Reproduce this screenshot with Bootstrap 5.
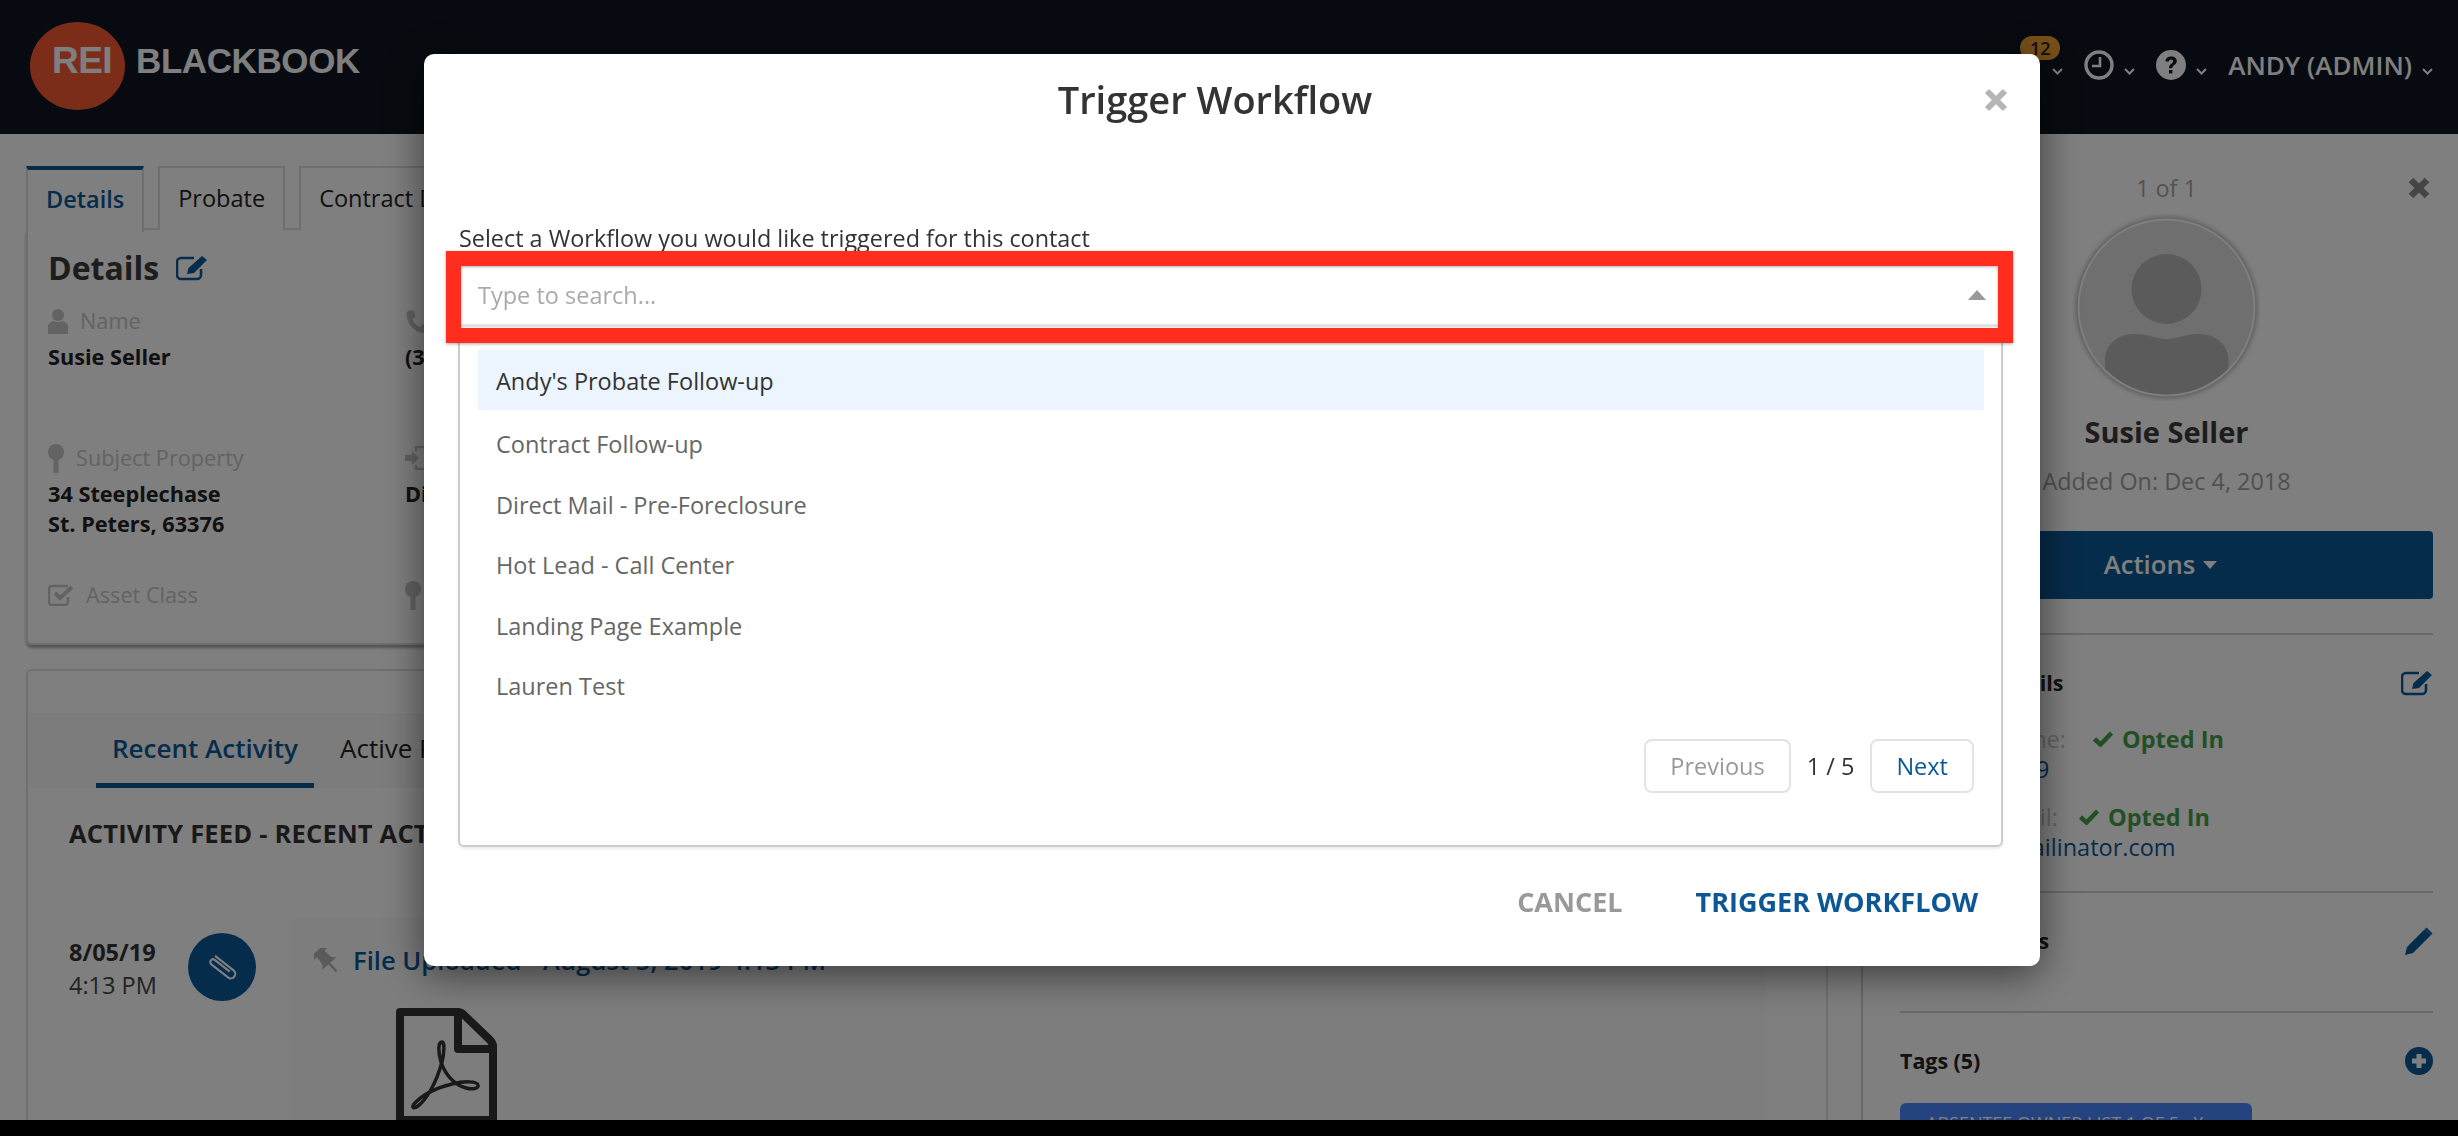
<!DOCTYPE html>
<html lang="en">
<head>
  <meta charset="UTF-8">
  <meta name="viewport" content="width=device-width, initial-scale=1.0">
  <title>Trigger Workflow</title>
  <!-- Bootstrap CSS -->
  <link href="https://cdn.jsdelivr.net/npm/bootstrap@5.3.0/dist/css/bootstrap.min.css" rel="stylesheet">
  <style>
    html, body { height: 100%; }
    body { background: #000; overflow: hidden; font-family: "Open Sans", sans-serif; font-size: 23.5px; color: #222; }
    svg { display: block; flex: none; }

    /* page behind the modal (colours are doubled, the backdrop halves them) */
    .app-shell { height: 1120px; overflow: hidden; background: #fff; }
    .top-bar { height: 134px; background: #0e1520; padding: 0 25px 0 30px; align-items: flex-start; flex-wrap: nowrap; }
    .logo-wrap { gap: 11px; margin-top: 22px; }
    .logo-disc { width: 95px; height: 88px; border-radius: 50%; background: #f85a34; font: 700 37px "Liberation Sans", sans-serif; color: #fff; letter-spacing: -.5px; padding: 0 0 10px 9px; }
    .logo-name { font: 700 35px "Liberation Sans", sans-serif; color: #fff; letter-spacing: -.4px; margin-top: -10px; }
    .top-tools { margin-top: 50px; color: #fff; }
    .tool-item { gap: 10px; margin-left: 21px; position: relative; }
    .tool-name { font-weight: 600; font-size: 26px; line-height: 30px; }
    .tool-count { position: absolute; left: 8px; top: -14px; width: 40px; height: 24px; border-radius: 12px; background: #f0a030; color: #222; font-size: 18px; font-weight: 600; line-height: 24px; text-align: center; }
    .tool-chev { margin-top: 18px; }

    .main-row { height: 986px; }
    .left-side { width: 1861px; padding: 32px 33px 0 26px; flex: none; }
    .right-side { width: 597px; flex: none; padding: 0 25px 0 37px; border-left: 2px solid #d2d2d2; }

    .page-tabs { border-bottom: 2px solid #dedede; gap: 14px; height: 64px; flex-wrap: nowrap; }
    .page-tabs .nav-link { height: 64px; padding: 0 18px; border: 2px solid #dedede; border-bottom: 0; border-radius: 0; color: #222; font-size: 23.5px; line-height: 60px; background: #fff; margin: 0; white-space: nowrap; }
    .page-tabs .nav-link.active { border-top: 4px solid #0c5898; color: #0c5898; font-weight: 600; padding: 0 18px; height: 66px; line-height: 58px; }
    .info-card { height: 415px; border: 2px solid #dcdcdc; border-top: 0; border-radius: 0 0 6px 6px; box-shadow: 0 3px 3px rgba(0,0,0,.35); padding: 16px 20px 0; }
    .info-title { font-size: 32px; font-weight: 700; line-height: 44px; gap: 17px; color: #3a3a3a; }
    .info-grid { display: grid; grid-template-columns: 357px 357px; grid-auto-rows: 137px; margin-top: 16px; }
    .info-label { gap: 12px; color: #c6c6c6; font-size: 21.7px; line-height: 30px; align-items: center; }
    .info-value { font-weight: 700; color: #222; font-size: 21.7px; line-height: 30px; margin-top: 6px; }

    .feed-card { margin-top: 24px; height: 460px; border: 2px solid #e0e0e0; border-bottom: 0; border-radius: 6px 6px 0 0; }
    .feed-tabs { margin-top: 42px; height: 75px; background: #f8f8f8; padding-left: 68px; gap: 10px; }
    .feed-tabs .nav-link { color: #222; font-size: 26px; padding: 0 16px; height: 75px; line-height: 70px; }
    .feed-tabs .nav-link.active { color: #0c5898; font-weight: 600; border-bottom: 5px solid #0c5898; }
    .feed-head { font-size: 25.5px; font-weight: 700; letter-spacing: .2px; color: #333; margin: 28px 0 0 41px; line-height: 34px; white-space: nowrap; }
    .feed-row { margin: 67px 0 0 41px; }
    .feed-when { width: 119px; font-size: 23.5px; line-height: 33px; color: #444; padding-top: 19px; flex: none; }
    .feed-when b { color: #333; }
    .feed-dot { width: 68px; height: 68px; border-radius: 50%; background: #0c5898; margin-top: 16px; flex: none; }
    .feed-body { width: 1476px; height: 210px; margin-left: 34px; background: #fbfbfb; border-radius: 10px 10px 0 0; padding: 28px 24px; flex: none; }
    .feed-link { gap: 13px; font-size: 25.6px; font-weight: 600; color: #0c5898; line-height: 32px; }
    .feed-file { margin: 31px 0 0 82px; }

    .side-count { margin-top: 39px; height: 30px; line-height: 30px; color: #a6a6a6; font-size: 23.5px; }
    .side-gap { width: 25px; }
    .side-x { margin-right: 3px; }
    .side-face { margin-top: 11px; }
    .side-name { font-size: 29px; font-weight: 700; color: #3a3a3a; line-height: 38px; margin-top: 12px; }
    .side-added { font-size: 23.4px; color: #a0a0a0; line-height: 32px; margin-top: 14px; }
    .side-btn { height: 68px; margin-top: 34px; background: #0c5898; color: #fff; font-size: 25.7px; font-weight: 600; border-radius: 4px; gap: 8px; padding-right: 24px; margin-bottom: 34px; }
    .side-btn:hover { background: #0c5898; color: #fff; }
    .side-rule { height: 2px; background: #d2d2d2; }
    .side-block-a { height: 256px; padding-top: 33px; }
    .side-block-b { height: 118px; padding-top: 33px; }
    .side-block-c { padding-top: 33px; }
    .side-title { font-size: 21.4px; font-weight: 700; color: #222; line-height: 30px; }
    .opt-row { gap: 27px; margin-top: 26px; line-height: 30px; align-items: center; font-size: 23.5px; color: #c6c6c6; white-space: nowrap; }
    .opt-row.opt-mail { margin-top: 18px; gap: 23px; }
    .opt-label { width: 166px; text-align: right; }
    .opt-mail .opt-label { width: 156px; }
    .opt-state { gap: 9px; color: #469e4a; font-weight: 700; font-size: 23.5px; }
    .opt-link { color: #0c5898; font-size: 23.5px; line-height: 30px; }
    .tag-chip { margin-top: 27px; width: 352px; height: 40px; background: #4a86ff; border-radius: 6px; color: #fff; font-size: 18px; line-height: 40px; padding-left: 26px; white-space: nowrap; }
    .tag-chip span { margin-left: 14px; }

    /* modal */
    .wf-dialog { max-width: 1616px; margin: 54px 0 0 424px; }
    .wf-content { height: 912px; border: 0; border-radius: 10px; box-shadow: 0 8px 40px rgba(0,0,0,.55); }
    .wf-head { height: 90px; padding: 0 28px 0 26px; margin-bottom: 2px; flex-wrap: nowrap; }
    .wf-title { flex-grow: 1; text-align: center; font-size: 38px; font-weight: 600; color: #333; line-height: 46px; }
    .wf-close { width: 32px; height: 32px; padding: 4px; border: 0; background: none; margin-top: 2px; }
    .wf-body { padding: 77px 37px 0 34px; flex: none; }
    .wf-label { display: block; font-size: 23.4px; line-height: 30px; color: #333; margin: 0 0 9px 1px; white-space: nowrap; }
    .wf-card { height: 585px; border: 2px solid #ccc; border-radius: 6px; box-shadow: 0 2px 3px rgba(0,0,0,.08); }
    .wf-search { position: relative; height: 61px; margin: 2px 3px 0 1px; border-bottom: 3px solid #e3e3e3; background: #fff; padding: 0 12px 0 17px; }
    .wf-input { border: 0; outline: 0; width: 100%; height: 58px; padding: 0; font-size: 23.5px; color: #333; background: none; }
    .wf-input::placeholder { color: #aaa; opacity: 1; }
    .wf-mark { position: absolute; left: -15px; right: -15px; top: -15px; bottom: -19px; border: 15px solid #ff2d1e; box-shadow: 0 1px 3px rgba(0,0,0,.35), inset 0 1px 3px rgba(0,0,0,.3); pointer-events: none; }
    .wf-card > .wf-list { margin: 23px 17px 0 18px; border-radius: 0; border-top: 0; border-bottom: 0; }
    .wf-list .list-group-item { height: 60.4px; border: 0; padding: 0 18px; line-height: 62px; font-size: 23.5px; color: #666; }
    .wf-list .list-group-item.is-on { background: #ecf4fe; color: #333; margin-bottom: 3px; }
    .wf-pager { gap: 16px; margin: 24px 27px 0 0; font-size: 23.5px; color: #333; }
    .wf-page { height: 54px; border: 2px solid #e3e3e3; border-radius: 8px; font-size: 23.5px; background: #fff; padding: 0 24px; color: #0c5896; }
    .wf-page.is-off:disabled { color: #999; opacity: 1; border-color: #e3e3e3; }
    .wf-foot { height: 110px; padding: 0 62px 0 0; gap: 73px; flex-wrap: nowrap; margin-bottom: 9px; }
    .wf-act { padding: 0; margin: 0; border: 0; font-size: 27px; font-weight: 700; color: #0c5896; }
    .wf-act.is-dim { color: #999; }
  </style>
</head>
<body>
<div class="app-shell">
  <nav class="navbar top-bar">
    <div class="d-flex logo-wrap align-items-center">
      <div class="logo-disc d-flex align-items-center justify-content-center">REI</div>
      <div class="logo-name">BLACKBOOK</div>
    </div>
    <div class="d-flex top-tools">
      <div class="d-flex tool-item">
        <svg width="30" height="30" viewBox="0 0 16 16" fill="#fff"><path d="M2 6h3l7-4v12l-7-4H2z"/></svg>
        <span class="tool-count">12</span>
        <svg class="tool-chev" width="11" height="7" viewBox="0 0 11 7" fill="none" stroke="#fff" stroke-width="2"><path d="M1 1l4.500 4.500L10 1"/></svg>
      </div>
      <div class="d-flex tool-item">
        <svg width="30" height="30" viewBox="0 0 30 30" fill="none" stroke="#fff" stroke-width="3.400"><circle cx="15" cy="15" r="13"/><path d="M16 7v9H8" stroke-width="2.600"/></svg>
        <svg class="tool-chev" width="11" height="7" viewBox="0 0 11 7" fill="none" stroke="#fff" stroke-width="2"><path d="M1 1l4.500 4.500L10 1"/></svg>
      </div>
      <div class="d-flex tool-item">
        <svg width="30" height="30" viewBox="0 0 30 30"><circle cx="15" cy="15" r="15" fill="#fff"/><path d="M9.500 11.500c0-3.200 2.500-5 5.700-5 3.300 0 5.600 1.800 5.600 4.600 0 4-4.500 3.800-4.500 7.100h-3.300c0-4.700 4.200-4.600 4.200-7 0-1.100-.9-1.800-2.100-1.800-1.300 0-2.200.8-2.300 2.100z" fill="#0e1520"/><rect x="13" y="20" width="3.400" height="3.400" fill="#0e1520"/></svg>
        <svg class="tool-chev" width="11" height="7" viewBox="0 0 11 7" fill="none" stroke="#fff" stroke-width="2"><path d="M1 1l4.500 4.500L10 1"/></svg>
      </div>
      <div class="d-flex tool-item">
        <span class="tool-name">ANDY (ADMIN)</span>
        <svg class="tool-chev" width="11" height="7" viewBox="0 0 11 7" fill="none" stroke="#fff" stroke-width="2"><path d="M1 1l4.500 4.500L10 1"/></svg>
      </div>
    </div>
  </nav>

  <div class="d-flex main-row">
    <div class="left-side">
      <ul class="nav page-tabs">
        <li class="nav-item"><a class="nav-link active" href="#">Details</a></li>
        <li class="nav-item"><a class="nav-link" href="#">Probate</a></li>
        <li class="nav-item"><a class="nav-link" href="#">Contract Details</a></li>
      </ul>
      <div class="info-card">
        <div class="d-flex align-items-center info-title">Details
          <svg width="32" height="26" viewBox="0 0 32 26" fill="none" stroke="#0c5898" stroke-width="2.600"><path d="M25 14v6a4 4 0 0 1-4 4H5a4 4 0 0 1-4-4V7a4 4 0 0 1 4-4h13"/><path d="M11 19l1.500-6L26 1l5 4-13 13z" fill="#0c5898" stroke="none"/></svg>
        </div>
        <div class="info-grid">
          <div>
            <div class="d-flex info-label">
              <svg width="20" height="25" viewBox="0 0 20 25" fill="#c6c6c6"><circle cx="10" cy="6" r="6"/><path d="M0 25v-7c0-4 3-5 6-6 2 1.500 6 1.500 8 0 3 1 6 2 6 6v7z"/></svg>
              Name
            </div>
            <div class="info-value">Susie Seller</div>
          </div>
          <div>
            <div class="d-flex info-label">
              <svg width="24" height="24" viewBox="0 0 16 16" fill="#c6c6c6"><path d="M3 1h3l1 4-2 2c1 2.500 2.500 4 5 5l2-2 3 1.500V14c0 1-1 2-2 2C6 16 1 9 1 3c0-1 1-2 2-2z"/></svg>
              Phone
            </div>
            <div class="info-value">(314) 555-0199</div>
          </div>
          <div>
            <div class="d-flex info-label">
              <svg width="16" height="29" viewBox="0 0 16 29" fill="#c6c6c6"><path d="M8 0a8 8 0 0 1 8 8c0 5-3 8-8 8s-8-3-8-8a8 8 0 0 1 8-8z"/><rect x="5.500" y="15" width="5" height="14"/></svg>
              Subject Property
            </div>
            <div class="info-value">34 Steeplechase<br>St. Peters, 63376</div>
          </div>
          <div>
            <div class="d-flex info-label">
              <svg width="24" height="24" viewBox="0 0 24 24" fill="#c6c6c6"><path d="M0 9h7V5l7 7-7 7v-4H0z"/><path d="M11 5V1h12v22H11v-4" fill="none" stroke="#c6c6c6" stroke-width="2.500"/></svg>
              Lead Source
            </div>
            <div class="info-value">Direct Mail</div>
          </div>
          <div>
            <div class="d-flex info-label">
              <svg width="26" height="22" viewBox="0 0 26 22" fill="none" stroke="#c6c6c6" stroke-width="2.400"><path d="M20 13v5a3 3 0 0 1-3 3H4a3 3 0 0 1-3-3V5a3 3 0 0 1 3-3h16"/><path d="M7 9l5 5L24 3" stroke-width="4"/></svg>
              Asset Class
            </div>
          </div>
          <div>
            <div class="d-flex info-label">
              <svg width="16" height="29" viewBox="0 0 16 29" fill="#c6c6c6"><path d="M8 0a8 8 0 0 1 8 8c0 5-3 8-8 8s-8-3-8-8a8 8 0 0 1 8-8z"/><rect x="5.500" y="15" width="5" height="14"/></svg>
              County
            </div>
          </div>
        </div>
      </div>

      <div class="feed-card">
        <ul class="nav feed-tabs">
          <li class="nav-item"><a class="nav-link active" href="#">Recent Activity</a></li>
          <li class="nav-item"><a class="nav-link" href="#">Active Processes</a></li>
        </ul>
        <div class="feed-head">ACTIVITY FEED - RECENT ACTIVITY</div>
        <div class="d-flex feed-row">
          <div class="feed-when"><b>8/05/19</b><br>4:13 PM</div>
          <div class="feed-dot d-flex align-items-center justify-content-center">
            <svg width="38" height="38" viewBox="0 0 34 34" fill="none" stroke="#fff" stroke-width="1.900"><g transform="rotate(38 17 17)"><path d="M6 13h21a4 4 0 0 1 0 8H8a2.500 2.500 0 0 1 0-5h17"/></g></svg>
          </div>
          <div class="feed-body">
            <div class="d-flex align-items-center feed-link">
              <svg width="26" height="26" viewBox="2 2 22 22" fill="#b4b4b4"><g transform="rotate(-42 13 13)"><rect x="6" y="1" width="14" height="4"/><path d="M9 4h8l1 9 3 3H5l3-3z"/><rect x="12" y="16" width="2" height="9"/></g></svg>
              File Uploaded - August 5, 2019 4:13 PM
            </div>
            <div class="feed-file">
              <svg width="101" height="116" viewBox="0 0 101 116" fill="none" stroke="#333" stroke-width="8" stroke-linejoin="round"><path d="M4 4h58c2 0 4 1 6 3l25 24c2 2 4 4 4 7v74H4z"/><path d="M62 4v37h35"/><path d="M46 34C42 34 42 44 45 54c4 12 13 23 25 26 8 2 13 0 12-3-1-4-14-4-26-1-16 4-30 11-38 20-3 4 0 5 4 2 8-6 18-22 24-44 2-8 3-20 0-20z" stroke-width="3.500"/></svg>
            </div>
          </div>
        </div>
      </div>
    </div>

    <div class="right-side">
      <div class="d-flex side-count">
        <div class="side-gap"></div>
        <div class="flex-grow-1 text-center">1 of 1</div>
        <svg class="align-self-center side-x" width="22" height="22" viewBox="0 0 22 22" stroke="#8a8a8a" stroke-width="6.500"><path d="M3 3l16 16M19 3L3 19"/></svg>
      </div>
      <div class="d-flex justify-content-center side-face">
        <svg width="187" height="187" viewBox="0 0 187 187">
          <defs><clipPath id="faceClip"><circle cx="93.500" cy="93.500" r="87"/></clipPath><filter id="faceGlow" x="-10%" y="-10%" width="120%" height="120%"><feGaussianBlur stdDeviation="3"/></filter></defs>
          <circle cx="93.500" cy="93.500" r="89" fill="#888" filter="url(#faceGlow)"/>
          <circle cx="93.500" cy="93.500" r="88" fill="#dedede" stroke="#fff" stroke-width="2"/>
          <g clip-path="url(#faceClip)" fill="#b6b6b6"><ellipse cx="93.500" cy="75" rx="35" ry="35"/><path d="M32 187v-40c0-16 12-27 30-27 14 0 20 5 31.500 5 12 0 18-5 32-5 18 0 30 11 30 27v40z"/></g>
        </svg>
      </div>
      <div class="text-center side-name">Susie Seller</div>
      <div class="text-center side-added">Added On: Dec 4, 2018</div>
      <button class="btn w-100 d-flex align-items-center justify-content-center side-btn">Actions
        <svg width="14" height="8" viewBox="0 0 14 8" fill="#fff"><path d="M0 0h14L7 8z"/></svg>
      </button>
      <div class="side-rule"></div>
      <div class="side-block-a">
        <div class="d-flex justify-content-between align-items-center">
          <span class="side-title">Contact Details</span>
          <svg width="32" height="26" viewBox="0 0 32 26" fill="none" stroke="#0c5898" stroke-width="2.600"><path d="M25 14v6a4 4 0 0 1-4 4H5a4 4 0 0 1-4-4V7a4 4 0 0 1 4-4h13"/><path d="M11 19l1.500-6L26 1l5 4-13 13z" fill="#0c5898" stroke="none"/></svg>
        </div>
        <div class="d-flex opt-row">
          <span class="opt-label">Mobile Phone:</span>
          <span class="d-flex align-items-center opt-state"><svg width="20" height="16" viewBox="0 0 20 16" fill="none" stroke="#469e4a" stroke-width="4.500"><path d="M1.500 8l6 5.500L18.500 2"/></svg>Opted In</span>
        </div>
        <div class="opt-link">314-555-0199</div>
        <div class="d-flex opt-row opt-mail">
          <span class="opt-label">Primary Email:</span>
          <span class="d-flex align-items-center opt-state"><svg width="20" height="16" viewBox="0 0 20 16" fill="none" stroke="#469e4a" stroke-width="4.500"><path d="M1.500 8l6 5.500L18.500 2"/></svg>Opted In</span>
        </div>
        <div class="opt-link">susie.12@mailinator.com</div>
      </div>
      <div class="side-rule"></div>
      <div class="side-block-b">
        <div class="d-flex justify-content-between align-items-center">
          <span class="side-title">Custom Fields</span>
          <svg width="28" height="28" viewBox="0 0 28 28" fill="#0c5898"><path d="M0 28l2-8L20 2l6 6L8 26z"/><path d="M21.500 0.500l6 6-1.500 1.500-6-6z"/></svg>
        </div>
      </div>
      <div class="side-rule"></div>
      <div class="side-block-c">
        <div class="d-flex justify-content-between align-items-center">
          <span class="side-title">Tags (5)</span>
          <svg width="28" height="28" viewBox="0 0 28 28"><circle cx="14" cy="14" r="14" fill="#0c5898"/><path d="M14 7v14M7 14h14" stroke="#fff" stroke-width="5"/></svg>
        </div>
        <div class="tag-chip">ABSENTEE OWNER LIST 1 OF 5<span>X</span></div>
      </div>
    </div>
  </div>
</div>

<div class="modal-backdrop fade show"></div>
<div class="modal fade show d-block" tabindex="-1">
  <div class="modal-dialog wf-dialog">
    <div class="modal-content wf-content">
      <div class="modal-header border-0 wf-head">
        <h5 class="modal-title wf-title">Trigger Workflow</h5>
        <button type="button" class="wf-close" aria-label="Close">
          <svg width="24" height="24" viewBox="0 0 24 24" stroke="#b5b5b5" stroke-width="6"><path d="M3 3l18 18M21 3L3 21"/></svg>
        </button>
      </div>
      <div class="modal-body wf-body">
        <label class="wf-label" for="workflowSearch">Select a Workflow you would like triggered for this contact</label>
        <div class="card wf-card">
          <div class="wf-search d-flex align-items-center">
            <input id="workflowSearch" class="wf-input" type="text" placeholder="Type to search...">
            <svg width="18" height="10" viewBox="0 0 18 10" fill="#999"><path d="M9 0l9 10H0z"/></svg>
            <div class="wf-mark"></div>
          </div>
          <div class="list-group wf-list">
            <div class="list-group-item is-on">Andy's Probate Follow-up</div>
            <div class="list-group-item">Contract Follow-up</div>
            <div class="list-group-item">Direct Mail - Pre-Foreclosure</div>
            <div class="list-group-item">Hot Lead - Call Center</div>
            <div class="list-group-item">Landing Page Example</div>
            <div class="list-group-item">Lauren Test</div>
          </div>
          <div class="d-flex justify-content-end align-items-center wf-pager">
            <button class="btn wf-page is-off" disabled>Previous</button>
            <span>1 / 5</span>
            <button class="btn wf-page">Next</button>
          </div>
        </div>
      </div>
      <div class="modal-footer border-0 wf-foot">
        <button type="button" class="btn wf-act is-dim">CANCEL</button>
        <button type="button" class="btn wf-act">TRIGGER WORKFLOW</button>
      </div>
    </div>
  </div>
</div>

<!-- Bootstrap JS -->
<script src="https://cdn.jsdelivr.net/npm/bootstrap@5.3.0/dist/js/bootstrap.bundle.min.js"></script>
</body>
</html>
